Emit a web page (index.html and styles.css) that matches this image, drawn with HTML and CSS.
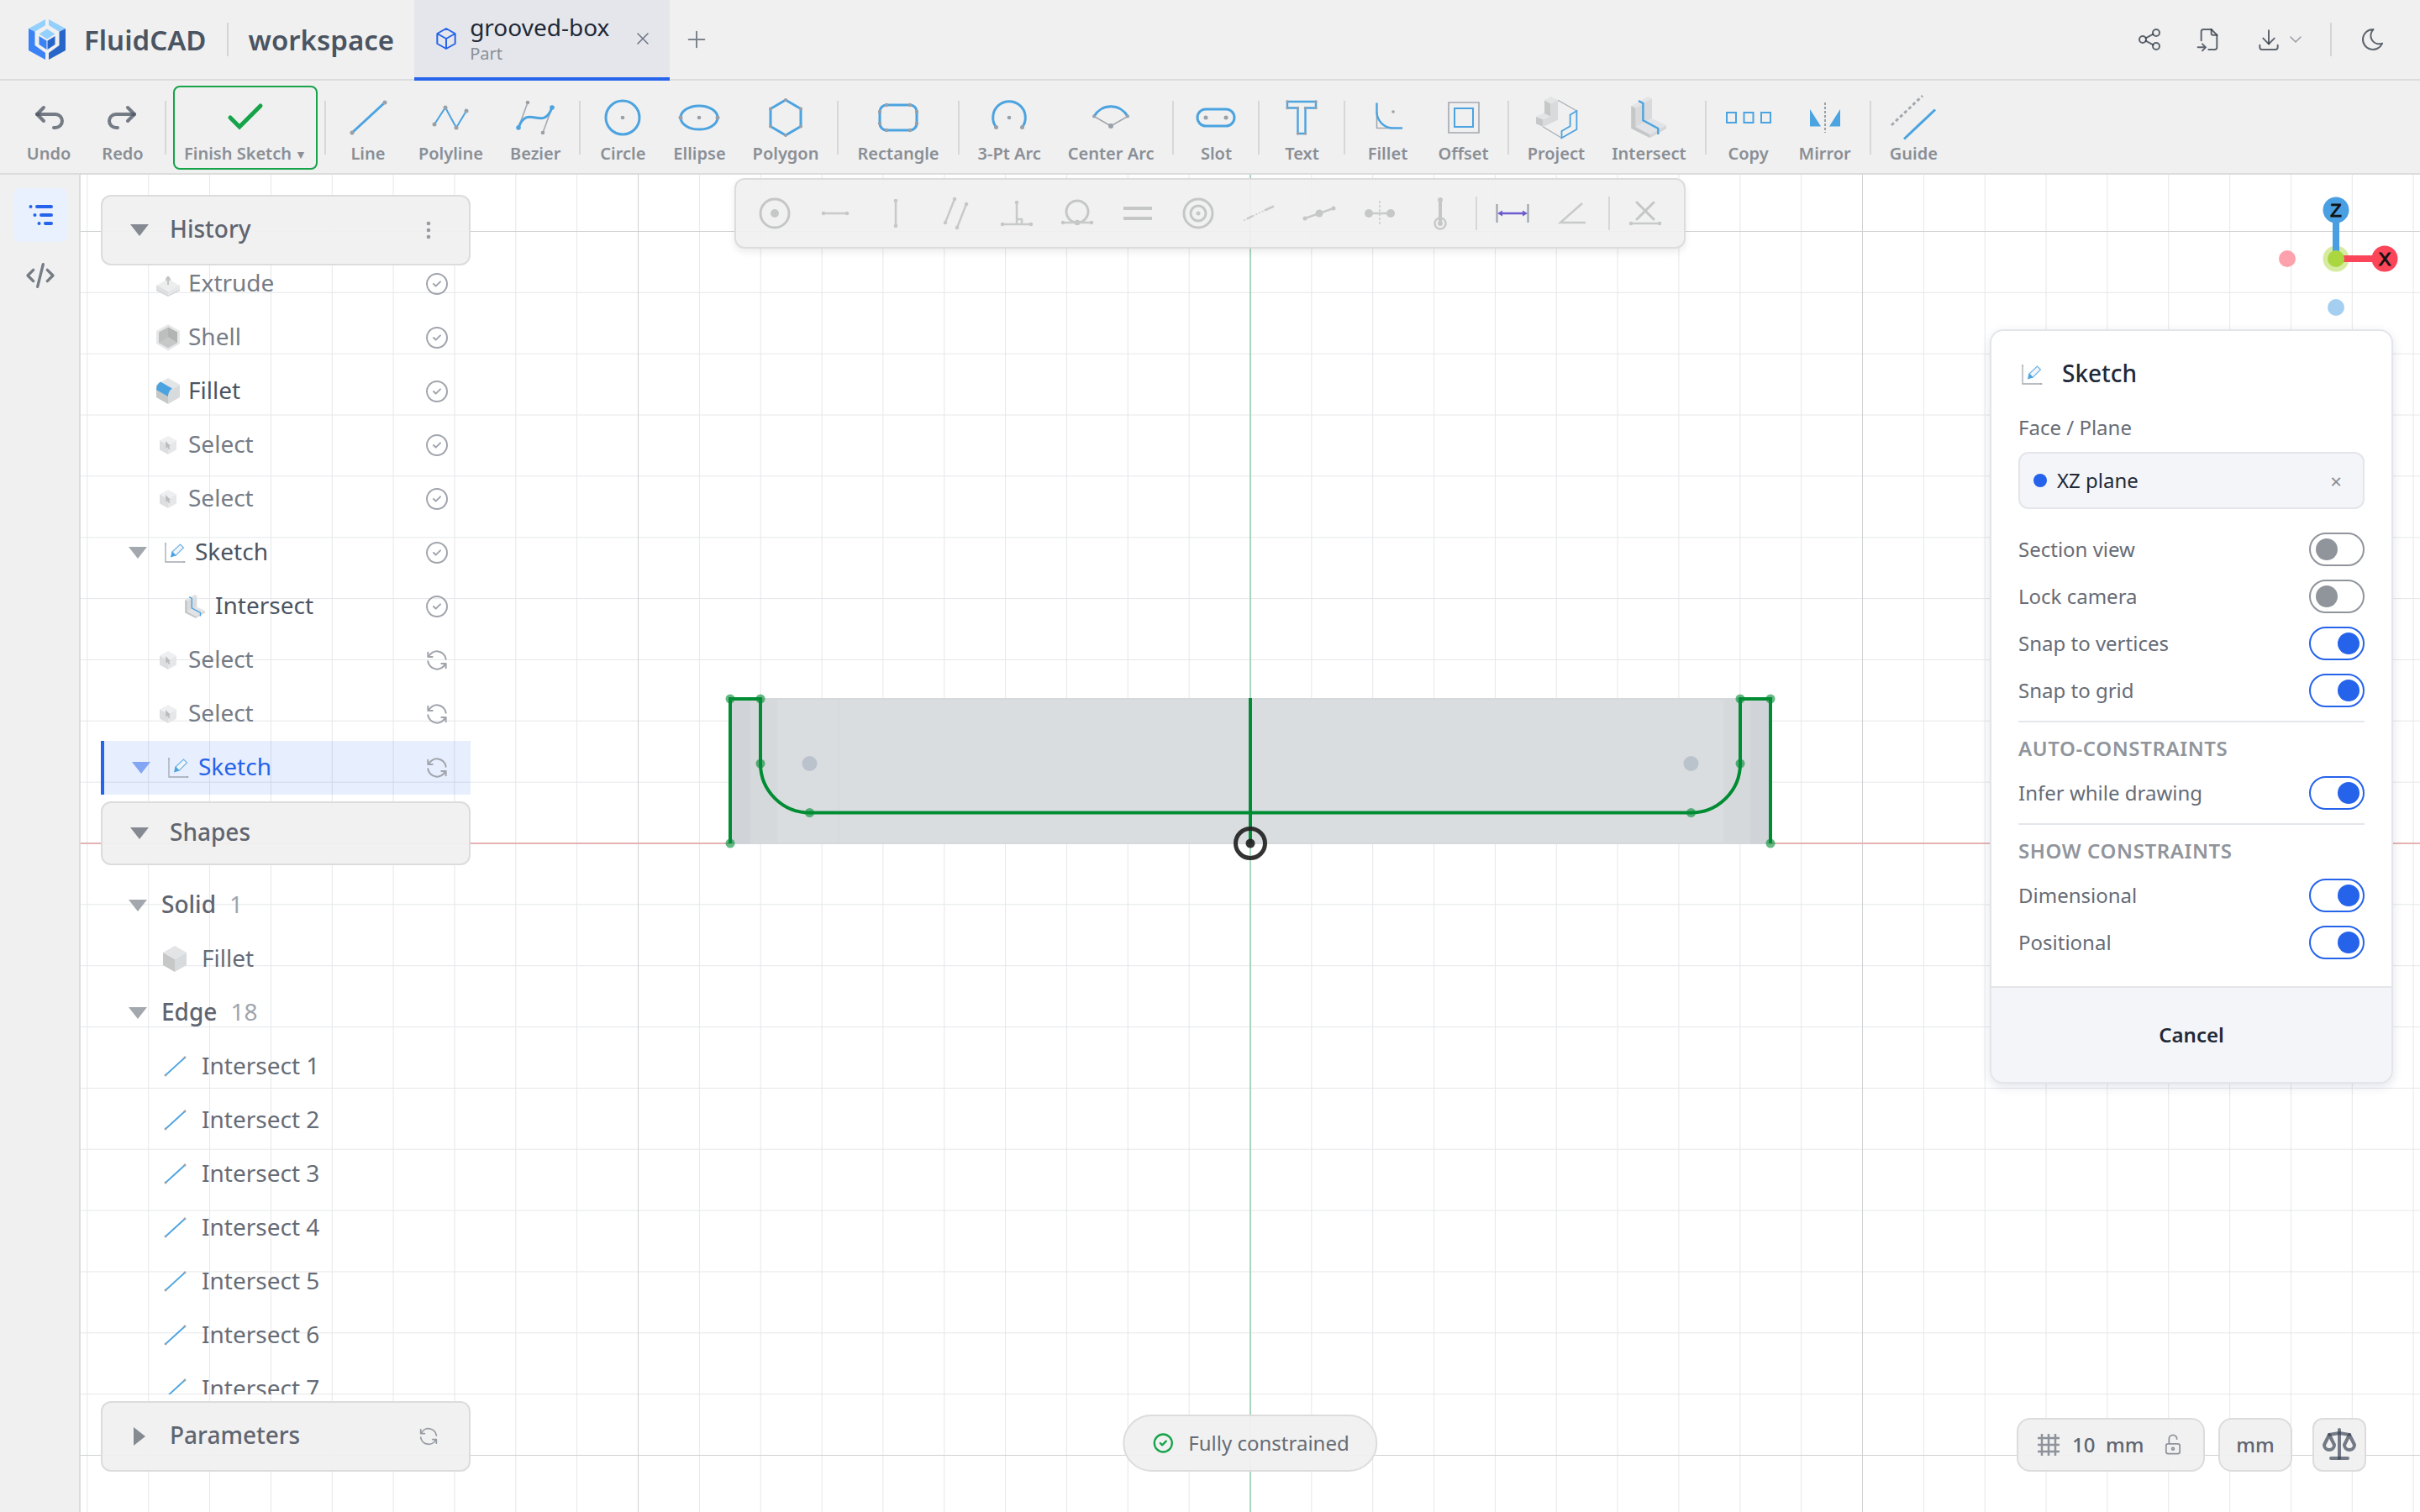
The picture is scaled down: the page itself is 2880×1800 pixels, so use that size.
FILE: index.html
```html
<!DOCTYPE html>
<html lang="en">
<head>
<meta charset="utf-8">
<title>FluidCAD – grooved-box</title>
<link rel="stylesheet" href="styles.css">
</head>
<body>
<svg class="sprite" aria-hidden="true">
  <symbol id="i-down" viewBox="0 0 24 24"><path fill="currentColor" d="M1 5h22L12 19z"/></symbol>
  <symbol id="i-right" viewBox="0 0 24 24"><path fill="currentColor" d="M5 1v22L19 12z"/></symbol>
  <symbol id="i-ok" viewBox="0 0 24 24"><path d="M3 12a9 9 0 1 0 18 0a9 9 0 1 0-18 0M9 12l2 2l4-4"/></symbol>
  <symbol id="i-refresh" viewBox="0 0 24 24"><path d="M20 11a8.1 8.1 0 0 0-15.5-2m-.5-4v4h4M4 13a8.1 8.1 0 0 0 15.5 2m.5 4v-4h-4"/></symbol>
  <symbol id="i-x" viewBox="0 0 24 24"><path d="M18 6L6 18M6 6l12 12"/></symbol>
  <symbol id="i-select" viewBox="0 0 32 32">
    <path fill="#eeeff0" d="M16 5l10 5.500-10 5.500-10-5.500z"/><path fill="#dddedf" d="M6 10.500l10 5.500v11L6 21.500z"/><path fill="#e6e7e9" d="M26 10.500L16 16v11l10-5.500z"/>
    <path fill="#b9bbbd" d="M13 11l6 6-2 .5 1.500 3-1.500.8-1.500-3-2 1.500z"/>
  </symbol>
  <symbol id="i-sketch" viewBox="0 0 32 32">
    <path fill="none" stroke="#a3a8b0" stroke-width="1.300" d="M5 5v22h23"/><path fill="#a3a8b0" d="M3.700 6L5 3.500 6.300 6zM26.500 25.700l2.500 1.300-2.500 1.300z"/>
    <path fill="#f2f5f8" stroke="#6fb4e8" stroke-width="1.200" d="M13 15l9.500-9 4 4-9.500 9.500z"/><path fill="#4ba3e0" d="M12.500 14.500l5 5-6.500 2z"/>
  </symbol>
  <symbol id="i-cube" viewBox="0 0 32 32"><path fill="#e3e4e6" d="M16 0l14 8-14 8L2 8z"/><path fill="#c6c8c8" d="M2 8l14 8v15L2 23z"/><path fill="#d8dbde" d="M30 8l-14 8v15l14-8z"/></symbol>
  <symbol id="i-segment" viewBox="0 0 32 32"><path stroke="#4ba3e0" stroke-width="1.800" d="M5 26L28 5"/><g fill="#9aa0a8"><circle cx="5" cy="26" r="1.400"/><circle cx="28" cy="5" r="1.400"/></g></symbol>
  <symbol id="i-intersect" viewBox="-28 -28 56 56">
    <path fill="#e3e4e6" d="M-20.800-14L-.600-25 4-22.700-15.300-11.300z"/><path fill="#c6c8c8" d="M-20.800-14l5.500 2.700V11L1.700 20v4.300L-20.800 13z"/>
    <path fill="#d8dadc" d="M-15.300-11.300L4-22.700V1L-15.300 11z"/><path fill="#e1e3e6" d="M-15.300 11L4 1l17 8.300L1.700 20z"/><path fill="#d4d7da" d="M21 9.300v4L1.700 24.300V20z"/>
    <path fill="none" stroke="#4ba3e0" stroke-width="2.400" d="M-12-20l5.400 3V3.300L11.300 13v7"/>
  </symbol>
</svg>

<header class="topbar">
  <a class="brand" href="#">
    <svg class="logo" viewBox="0 0 48 48">
      <path fill="#93d0fd" d="M22 0v7L9.500 14.700 2 11zM26 0v7l12.500 7.700L46 11z"/>
      <path fill="#3b82f6" d="M2 11l7.500 3.700V31L22 40v8L2 37z"/><path fill="#2765c9" d="M46 11l-7.500 3.700V31L26 40v8l20-11z"/>
      <path fill="#93d0fd" d="M24 11.500l9.500 6-9.500 6-9.500-6z"/><path fill="#3b82f6" d="M14.500 20l9 5.500V36l-9-6z"/><path fill="#2765c9" d="M33.500 20l-9 5.500V36l9-6z"/>
    </svg>
    <span>FluidCAD</span>
  </a>
  <span class="bar"></span>
  <span class="workspace">workspace</span>
  <div class="tab">
    <svg class="ico accent" viewBox="0 0 24 24"><path d="M12 3l8 4.500v9L12 21l-8-4.500v-9zM12 12l8-4.500M12 12v9M12 12L4 7.500"/></svg>
    <div class="tab-text"><span class="tab-name">grooved-box</span><span class="tab-kind">Part</span></div>
    <button class="tab-close" aria-label="Close tab"><svg class="ico s24"><use href="#i-x"/></svg></button>
  </div>
  <button class="new-tab" aria-label="New tab"><svg class="ico" viewBox="0 0 24 24"><path d="M12 5v14M5 12h14"/></svg></button>
  <div class="actions">
    <button class="act" aria-label="Share"><svg class="ico" viewBox="0 0 24 24"><path d="M3 12a3 3 0 1 0 6 0a3 3 0 1 0-6 0M15 6a3 3 0 1 0 6 0a3 3 0 1 0-6 0M15 18a3 3 0 1 0 6 0a3 3 0 1 0-6 0"/><path d="M8.700 10.700l6.600-3.400M8.700 13.300l6.600 3.400"/></svg></button>
    <button class="act" aria-label="Import"><svg class="ico" viewBox="0 0 24 24"><path d="M14 3v4a1 1 0 0 0 1 1h4"/><path d="M5 13V5a2 2 0 0 1 2-2h7l5 5v11a2 2 0 0 1-2 2h-5.500M2 19h7m-3-3l3 3l-3 3"/></svg></button>
    <button class="act download" aria-label="Export"><svg class="ico" viewBox="0 0 24 24"><path d="M4 17v2a2 2 0 0 0 2 2h12a2 2 0 0 0 2-2v-2"/><path d="M7 11l5 5l5-5"/><path d="M12 4v12"/></svg><svg class="ico s24 dim" viewBox="0 0 24 24"><path d="M6 9l6 6l6-6"/></svg></button>
    <span class="bar"></span>
    <button class="act" aria-label="Dark mode"><svg class="ico" viewBox="0 0 24 24"><path d="M12 3c.132 0 .263 0 .393 0a7.500 7.500 0 0 0 7.920 12.446a9 9 0 1 1-8.313-12.454z"/></svg></button>
  </div>
</header>

<nav class="toolbar" aria-label="Sketch tools">
  <button class="tool"><svg viewBox="-2 -2 28 28" class="hist"><path d="M9 14l-4-4l4-4"/><path d="M5 10h11a4 4 0 1 1 0 8h-1"/></svg>Undo</button>
  <button class="tool"><svg viewBox="-2 -2 28 28" class="hist"><path d="M15 14l4-4l-4-4"/><path d="M19 10H8a4 4 0 1 0 0 8h1"/></svg>Redo</button>
  <span class="sep"></span>
  <button class="tool finish"><svg viewBox="-28 -28 56 56"><path fill="none" stroke="#16a34a" stroke-width="5" stroke-linecap="round" d="M-18 0L-7 11 18-14"/></svg><span>Finish Sketch<small>▼</small></span></button>
  <span class="sep"></span>
  <button class="tool"><svg class="draw" viewBox="-28 -28 56 56"><path d="M-19 18L20-18"/><circle cx="-19" cy="18" r="2.500"/><circle cx="20" cy="-18" r="2.500"/></svg>Line</button>
  <button class="tool"><svg class="draw thin" viewBox="-28 -28 56 56"><path d="M-19 8L-6-12 7 12 19-8"/><circle cx="-19" cy="8" r="2.500"/><circle cx="-6" cy="-12" r="2.500"/><circle cx="7" cy="12" r="2.500"/><circle cx="19" cy="-8" r="2.500"/></svg>Polyline</button>
  <button class="tool"><svg class="draw" viewBox="-28 -28 56 56"><path class="g" d="M-20 12L-9-18M20-12L9 18"/><path d="M-20 12C-9-18 9 18 20-12"/><circle cx="-9" cy="-18" r="2.300"/><circle cx="9" cy="18" r="2.300"/><circle class="b" cx="-20" cy="12" r="2.800"/><circle class="b" cx="20" cy="-12" r="2.800"/></svg>Bezier</button>
  <span class="sep"></span>
  <button class="tool"><svg class="draw" viewBox="-28 -28 56 56"><path d="M-20 0a20 20 0 1 0 40 0a20 20 0 1 0-40 0"/><circle r="2.300"/></svg>Circle</button>
  <button class="tool"><svg class="draw" viewBox="-28 -28 56 56"><path d="M-22 0a22 14 0 1 0 44 0a22 14 0 1 0-44 0"/><circle r="2.300"/><circle cx="-22" r="2.500"/><circle cx="22" r="2.500"/></svg>Ellipse</button>
  <button class="tool"><svg class="draw" viewBox="-28 -28 56 56"><path d="M0-21l18 10.500v21L0 21l-18-10.500v-21z"/><circle cy="-21" r="2"/><circle cx="18" cy="-10.500" r="2"/><circle cx="18" cy="10.500" r="2"/><circle cy="21" r="2"/><circle cx="-18" cy="-10.500" r="2"/><circle cx="-18" cy="10.500" r="2"/></svg>Polygon</button>
  <span class="sep"></span>
  <button class="tool"><svg class="draw" viewBox="-28 -28 56 56"><path d="M-14-15h28a8 8 0 0 1 8 8V7a8 8 0 0 1-8 8h-28a8 8 0 0 1-8-8V-7a8 8 0 0 1 8-8z"/><circle cx="-14" cy="-15" r="2.200"/><circle cx="14" cy="-15" r="2.200"/><circle cx="-14" cy="15" r="2.200"/><circle cx="14" cy="15" r="2.200"/><circle cx="-22" cy="-7" r="2.200"/><circle cx="22" cy="-7" r="2.200"/><circle cx="-22" cy="7" r="2.200"/><circle cx="22" cy="7" r="2.200"/></svg>Rectangle</button>
  <span class="sep"></span>
  <button class="tool"><svg class="draw" viewBox="-28 -28 56 56"><path d="M-15.500 11.500A19.300 19.300 0 1 1 15.500 11.500"/><circle r="2.300"/><circle cx="-15.500" cy="11.500" r="2.500"/><circle cx="15.500" cy="11.500" r="2.500"/></svg>3-Pt Arc</button>
  <button class="tool"><svg class="draw" viewBox="-28 -28 56 56"><path class="g" d="M-20-1.500L0 10 20-1.500"/><path d="M-20-1.500A23 23 0 0 1 20-1.500"/><circle cy="10" r="3"/><circle cx="-20" cy="-1.500" r="2"/><circle cx="20" cy="-1.500" r="2"/></svg>Center Arc</button>
  <span class="sep"></span>
  <button class="tool"><svg class="draw" viewBox="-28 -28 56 56"><path d="M-12-10h24a10 10 0 0 1 0 20h-24a10 10 0 0 1 0-20z"/><circle cx="-12" r="2.500"/><circle cx="12" r="2.500"/></svg>Slot</button>
  <span class="sep"></span>
  <button class="tool"><svg class="draw mid" viewBox="-28 -28 56 56"><path d="M-17-19h34v7.500H4.500V19h-9v-30.500H-17z"/><circle cx="-17" cy="-19" r="1.700"/><circle cx="17" cy="-19" r="1.700"/><circle cx="17" cy="-11.500" r="1.700"/><circle cx="-17" cy="-11.500" r="1.700"/><circle cx="4.500" cy="-11.500" r="1.700"/><circle cx="-4.500" cy="-11.500" r="1.700"/><circle cx="4.500" cy="19" r="1.700"/><circle cx="-4.500" cy="19" r="1.700"/></svg>Text</button>
  <span class="sep"></span>
  <button class="tool"><svg class="draw mid" viewBox="-28 -28 56 56"><path class="g" d="M-12.500-7v19.500H7"/><path d="M-12.500-17.500V-7A19.500 19.500 0 0 0 7 12.500H18"/><circle cx="7" cy="-7" r="1.800"/></svg>Fillet</button>
  <button class="tool"><svg class="draw thin" viewBox="-28 -28 56 56"><path class="g" d="M-18-18h36v36h-36z"/><path d="M-11-11h22v22h-22z"/></svg>Offset</button>
  <span class="sep"></span>
  <button class="tool"><svg viewBox="-28 -28 56 56"><path fill="#e3e4e6" d="M-6.400-25L2-20.700l-8.400 4.400-7.600-4.400zM-24-1l10-5 7 4-8.600 4.300z"/><path fill="#c6c8c8" d="M-14-20.700l7.600 4.400v15L-14-5zM-24-1l8.400 3.300V11L-24 7.300z"/><path fill="#d8dadc" d="M-6.400-16.300L2-20.700V2.700L-15.600 11V2.300l9.200-4z"/><path fill="none" stroke="#a9adb3" stroke-width="1.300" d="M2-20.700L24.400-8M-15.600 11L6.500 24.300"/><path fill="none" stroke="#4ba3e0" stroke-width="1.800" d="M24.400-8v22L6.500 24.300V16l10.100-5.700V-3.300z"/></svg>Project</button>
  <button class="tool"><svg><use href="#i-intersect"/></svg>Intersect</button>
  <span class="sep"></span>
  <button class="tool"><svg class="draw thin" viewBox="-28 -28 56 56"><path d="M-26-6h11V6h-11zM-5.500-6h11V6h-11zM15-6h11V6H15z"/></svg>Copy</button>
  <button class="tool"><svg viewBox="-28 -28 56 56"><path fill="#4ba3e0" d="M-18-10l13 20.500h-13zM18-10L5 10.500h13z"/><path stroke="#9aa0a8" stroke-width="2" stroke-dasharray="3 2" d="M0-18V18"/></svg>Mirror</button>
  <span class="sep"></span>
  <button class="tool"><svg class="draw" viewBox="-28 -28 56 56"><path class="g dash" stroke-dasharray="4 3" d="M-26 9L11-26"/><path d="M-11 25.500L26-9.500"/></svg>Guide</button>
</nav>

<div class="body">
  <aside class="rail">
    <button class="rail-btn on" aria-label="Tree"><svg viewBox="0 0 64 64"><path stroke="#2563eb" stroke-width="4" stroke-linecap="round" d="M20.500 22h0M28 22h17M25.500 32h0M33 32h12M30.500 42h0M38 42h7"/></svg></button>
    <button class="rail-btn" aria-label="Code"><svg class="code" viewBox="0 0 24 24"><path d="M7 8l-4 4l4 4M17 8l4 4l-4 4M14 4l-4 16"/></svg></button>
  </aside>

  <main class="viewport">
    <svg class="scene" viewBox="-1392 -796 2784 1592" preserveAspectRatio="xMidYMid slice">
      <defs>
        <path id="cols" d="M72.850-900V900M145.700-900V900M218.550-900V900M291.400-900V900M364.250-900V900M437.100-900V900M509.950-900V900M582.800-900V900M655.650-900V900"/>
        <path id="rows" d="M-1500 72.850H1500M-1500 145.700H1500M-1500 218.550H1500M-1500 291.400H1500M-1500 364.250H1500M-1500 437.100H1500M-1500 509.950H1500M-1500 582.800H1500M-1500 655.650H1500"/>
      </defs>
      <g stroke="#e6e7ea" fill="none">
        <use href="#cols" x="-1457"/><use href="#cols" x="-728.500"/><use href="#cols"/><use href="#cols" x="728.500"/>
        <use href="#rows" y="-1457"/><use href="#rows" y="-728.500"/><use href="#rows"/><use href="#rows" y="728.500"/>
      </g>
      <path stroke="#d0d1d2" d="M-728.500-900V900M728.500-900V900M-1500-728.500H1500M-1500 728.500H1500"/>
      <path stroke="#e6b2b3" stroke-width="2" d="M-1500 0H1500"/>
      <path fill="#dadde0" d="M-619-173H619V1H-619z"/>
      <path fill="#d0d4d9" d="M-619-173h24V1h-24zM619-173h-24V1h24z"/>
      <path fill="#d5d9dc" d="M-595-173h32V1h-32zM595-173h-32V1h32zM-563-173H563v2H-563zM-563-1H563v2H-563z"/>
      <path stroke="#d5d6d8" d="M-489.500-171V-1"/>
      <path stroke="#a9d6bc" stroke-width="2" d="M0-900V900"/>
      <g fill="#bac2cc"><circle cx="-524.500" cy="-95" r="9"/><circle cx="524.500" cy="-95" r="9"/></g>
      <path fill="none" stroke="#008c33" stroke-width="4" d="M-619 0V-172h36V-95A58.500 58.500 0 0 0-524.500-36.500H524.500A58.500 58.500 0 0 0 583-95V-172h36V0M0-173V0"/>
      <g fill="#008c33" opacity=".6"><circle cx="-619" cy="-172" r="5.500"/><circle cx="-583" cy="-172" r="5.500"/><circle cx="-583" cy="-95" r="5.500"/><circle cx="-524.500" cy="-36.500" r="5.500"/><circle cx="-619" r="5.500"/><circle cx="619" cy="-172" r="5.500"/><circle cx="583" cy="-172" r="5.500"/><circle cx="583" cy="-95" r="5.500"/><circle cx="524.500" cy="-36.500" r="5.500"/><circle cx="619" r="5.500"/></g>
      <g opacity=".92"><circle r="17.500" fill="none" stroke="#222" stroke-width="5"/><circle r="5.500" fill="#222"/></g>
    </svg>

    <div class="sidebar">
      <div class="sec-head"><svg class="tri"><use href="#i-down"/></svg><span>History</span>
        <button class="icon-btn" aria-label="History menu"><svg viewBox="0 0 32 32"><g fill="#979ba2"><circle cx="16" cy="8" r="2.300"/><circle cx="16" cy="16" r="2.300"/><circle cx="16" cy="24" r="2.300"/></g></svg></button></div>
      <ul class="list history">
        <li class="row leaf mute"><svg class="pic" viewBox="0 0 32 32"><path fill="#cfd0d1" d="M2 24l14 7 14-7v-1.500L16 29 2 22.500z"/><path fill="#eceded" d="M16 10l14 8-14 6L2 18z"/><path fill="#dedfe0" d="M2 17.500l14 7V30L2 22.500z"/><path fill="#e6e7e9" d="M30 17.500l-14 7V30l14-7.500z"/><path fill="#c3c6c6" d="M15 17V12h-2.500L14 8l2-1.500L18 8l1.500 4H17v5z"/></svg>Extrude<svg class="ico status"><use href="#i-ok"/></svg></li>
        <li class="row leaf mute"><svg class="pic" viewBox="0 0 32 32"><path fill="#e6e7e8" d="M16 0l14 8v15l-14 8.500L2 23V8z"/><path fill="#bdbfbf" d="M16 3.500l11 6V22l-11 6-11-6V9.500z"/><path fill="#b2b4b4" d="M16 3.500l11 6V22l-11-7z"/><path fill="#c6c8c8" d="M5 22l11-7 11 7-11 6z"/></svg>Shell<svg class="ico status"><use href="#i-ok"/></svg></li>
        <li class="row leaf"><svg class="pic"><use href="#i-cube"/><path fill="#4ba3e0" d="M7 4.500L21 12.500q-5 3-5 9.500L2 14Q2.500 7 7 4.500z"/></svg>Fillet<svg class="ico status"><use href="#i-ok"/></svg></li>
        <li class="row leaf mute"><svg class="pic"><use href="#i-select"/></svg>Select<svg class="ico status"><use href="#i-ok"/></svg></li>
        <li class="row leaf mute"><svg class="pic"><use href="#i-select"/></svg>Select<svg class="ico status"><use href="#i-ok"/></svg></li>
        <li class="row"><svg class="tri"><use href="#i-down"/></svg><svg class="pic"><use href="#i-sketch"/></svg>Sketch<svg class="ico status"><use href="#i-ok"/></svg></li>
        <li class="row child"><svg class="pic"><use href="#i-intersect"/></svg>Intersect<svg class="ico status"><use href="#i-ok"/></svg></li>
        <li class="row leaf mute"><svg class="pic"><use href="#i-select"/></svg>Select<svg class="ico status"><use href="#i-refresh"/></svg></li>
        <li class="row leaf mute"><svg class="pic"><use href="#i-select"/></svg>Select<svg class="ico status"><use href="#i-refresh"/></svg></li>
        <li class="row active"><svg class="tri"><use href="#i-down"/></svg><svg class="pic"><use href="#i-sketch"/></svg>Sketch<svg class="ico status"><use href="#i-refresh"/></svg></li>
      </ul>
      <div class="sec-head short"><svg class="tri"><use href="#i-down"/></svg><span>Shapes</span></div>
      <ul class="list shapes">
        <li class="row group"><svg class="tri"><use href="#i-down"/></svg>Solid<span class="count">1</span></li>
        <li class="row item"><svg class="pic"><use href="#i-cube"/></svg>Fillet</li>
        <li class="row group"><svg class="tri"><use href="#i-down"/></svg>Edge<span class="count">18</span></li>
        <li class="row item"><svg class="pic"><use href="#i-segment"/></svg>Intersect 1</li>
        <li class="row item"><svg class="pic"><use href="#i-segment"/></svg>Intersect 2</li>
        <li class="row item"><svg class="pic"><use href="#i-segment"/></svg>Intersect 3</li>
        <li class="row item"><svg class="pic"><use href="#i-segment"/></svg>Intersect 4</li>
        <li class="row item"><svg class="pic"><use href="#i-segment"/></svg>Intersect 5</li>
        <li class="row item"><svg class="pic"><use href="#i-segment"/></svg>Intersect 6</li>
        <li class="row item"><svg class="pic"><use href="#i-segment"/></svg>Intersect 7</li>
      </ul>
      <div class="sec-head last"><svg class="tri"><use href="#i-right"/></svg><span>Parameters</span>
        <button class="icon-btn" aria-label="Refresh parameters"><svg class="ico s28"><use href="#i-refresh"/></svg></button></div>
    </div>

    <div class="constraints" role="toolbar" aria-label="Constraints">
      <button aria-label="Coincident"><svg viewBox="-24 -24 48 48"><circle class="o" r="17"/><circle r="5"/></svg></button>
      <button aria-label="Horizontal"><svg viewBox="-24 -24 48 48"><path class="l" d="M-14 0h28"/><circle cx="-14" r="2.300"/><circle cx="14" r="2.300"/></svg></button>
      <button aria-label="Vertical"><svg viewBox="-24 -24 48 48"><path class="l" d="M0-15v30"/><circle cy="-15" r="2.300"/><circle cy="15" r="2.300"/></svg></button>
      <button aria-label="Parallel"><svg viewBox="-24 -24 48 48"><path class="l" d="M-13 11l11-28M1 17l11-28"/><circle cx="-13" cy="11" r="2.300"/><circle cx="-2" cy="-17" r="2.300"/><circle cx="1" cy="17" r="2.300"/><circle cx="12" cy="-11" r="2.300"/></svg></button>
      <button aria-label="Perpendicular"><svg viewBox="-24 -24 48 48"><path class="l" d="M-17 13h34M0-13v26M0 7h6v6"/><circle cx="-17" cy="13" r="2.300"/><circle cx="17" cy="13" r="2.300"/><circle cy="-13" r="2.300"/></svg></button>
      <button aria-label="Tangent"><svg viewBox="-24 -24 48 48"><circle class="o" cy="-2" r="13"/><path class="l" d="M-17 11h34"/><circle cx="-17" cy="11" r="2.300"/><circle cx="17" cy="11" r="2.300"/><circle cy="11" r="3.300"/></svg></button>
      <button aria-label="Equal"><svg viewBox="-24 -24 48 48"><path class="t" d="M-17-6h34M-17 6h34"/></svg></button>
      <button aria-label="Concentric"><svg viewBox="-24 -24 48 48"><circle class="o" r="17"/><circle class="o" r="9"/><circle r="2.500"/></svg></button>
      <button aria-label="Collinear"><svg viewBox="-24 -24 48 48"><path class="l" d="M-14 6.500l7-3.500M7-3.500l11-5"/><path class="l fine" stroke-dasharray="2 2" d="M-18 8.500L7-3.500"/></svg></button>
      <button aria-label="Midpoint"><svg viewBox="-24 -24 48 48"><path class="l" d="M-17 6l34-12"/><circle r="4.500"/><circle cx="-17" cy="6" r="2.500"/><circle cx="17" cy="-6" r="2.500"/></svg></button>
      <button aria-label="Symmetric"><svg viewBox="-24 -24 48 48"><path class="l" d="M-13 0h26"/><path class="l fine" stroke-dasharray="3 2" d="M0-15v30"/><circle cx="-13" r="5"/><circle cx="13" r="5"/></svg></button>
      <button aria-label="Fix"><svg viewBox="-24 -24 48 48"><path class="t" d="M0-16v27"/><circle cy="-16" r="3"/><circle cy="12" r="3"/><circle class="l" cy="12" r="6.500"/></svg></button>
      <span class="sep"></span>
      <button aria-label="Dimension"><svg viewBox="-24 -24 48 48"><path fill="none" stroke="#979da5" stroke-width="2" d="M-18.500-11v22M18.500-11v22"/><path stroke="#6a5bd0" stroke-width="2.500" d="M-14 0h28"/><path fill="#6a5bd0" d="M-18 0l6-3.500v7zM18 0l-6-3.500v7z"/></svg></button>
      <button aria-label="Angle"><svg viewBox="-24 -24 48 48"><path class="l" d="M11-12L-15 11h30"/></svg></button>
      <span class="sep"></span>
      <button aria-label="Delete constraint"><svg viewBox="-24 -24 48 48"><path class="o" stroke-linecap="round" d="M-10-13L10 7M10-13L-10 7"/><path class="l" d="M-17 12h34"/><circle cx="-17" cy="12" r="2.300"/><circle cx="17" cy="12" r="2.300"/></svg></button>
    </div>

    <svg class="gizmo" viewBox="-74 -74 148 148">
      <circle r="15.500" fill="#d6eaa0"/><path stroke="#4a9fe3" stroke-width="8" d="M0-44V-9"/><path stroke="#fb4559" stroke-width="8" d="M9 0h36"/><circle r="10" fill="#aad740"/>
      <circle cy="-58" r="15.500" fill="#4a9fe3"/><circle cx="58" r="15.500" fill="#fb4559"/><circle cx="-58" r="10" fill="#fda1ac"/><circle cy="58" r="10" fill="#a4cff1"/>
      <text x="0" y="-50" text-anchor="middle">Z</text><text x="58" y="8" text-anchor="middle">X</text>
    </svg>

    <section class="panel">
      <div class="panel-body">
        <h2><svg class="pic"><use href="#i-sketch"/></svg><span>Sketch</span></h2>
        <div class="flabel">Face / Plane</div>
        <div class="field"><i></i><span>XZ plane</span><button aria-label="Clear plane">×</button></div>
        <div class="group-rows">
          <label>Section view<input type="checkbox"></label>
          <label>Lock camera<input type="checkbox"></label>
          <label>Snap to vertices<input type="checkbox" checked></label>
          <label>Snap to grid<input type="checkbox" checked></label>
          <hr>
          <h3>AUTO-CONSTRAINTS</h3>
          <label>Infer while drawing<input type="checkbox" checked></label>
          <hr>
          <h3>SHOW CONSTRAINTS</h3>
          <label>Dimensional<input type="checkbox" checked></label>
          <label>Positional<input type="checkbox" checked></label>
        </div>
      </div>
      <button class="cancel">Cancel</button>
    </section>

    <div class="pill"><svg class="ico s28"><use href="#i-ok"/></svg><span>Fully constrained</span></div>

    <div class="units">
      <div class="unit-box snap">
        <svg class="hash" viewBox="0 0 28 28"><path d="M6 1v26M14 1v26M22 1v26M1 6h26M1 14h26M1 22h26"/></svg>
        <input class="size" value="10" aria-label="Grid size"><span>mm</span>
        <svg class="ico s28 lock" viewBox="0 0 24 24"><path d="M5 13a2 2 0 0 1 2-2h10a2 2 0 0 1 2 2v6a2 2 0 0 1-2 2H7a2 2 0 0 1-2-2zM8 11V6a4 4 0 0 1 8 0"/><circle cx="12" cy="16" r="1.200"/></svg>
      </div>
      <button class="unit-box"><span>mm</span></button>
      <button class="unit-box scale" aria-label="Mass properties"><svg viewBox="0 0 24 24"><path d="M7 20h10"/><path d="M6 6l6-1l6 1"/><path d="M12 3v17"/><path d="M9 12L6 6l-3 6a3 3 0 0 0 6 0"/><path d="M21 12l-3-6l-3 6a3 3 0 0 0 6 0"/></svg></button>
    </div>
  </main>
</div>
</body>
</html>
```

FILE: styles.css
```css
* { box-sizing: border-box; }
html, body { height: 100%; }
body {
  margin: 0;
  display: flex;
  flex-direction: column;
  background: #fff;
  color: #1f2937;
  font-family: "Noto Sans", sans-serif;
  font-size: 24px;
  overflow: hidden;
}
button, input { font: inherit; color: inherit; }
button { background: none; border: 0; padding: 0; cursor: pointer; }
ul { list-style: none; margin: 0; padding: 0; }
svg { display: block; flex: none; }
.sprite { position: absolute; width: 0; height: 0; }

.ico {
  width: 32px;
  height: 32px;
  fill: none;
  stroke: currentColor;
  stroke-width: 1.5;
  stroke-linecap: round;
  stroke-linejoin: round;
}
.s24 { width: 24px; height: 24px; }
.s28 { width: 28px; height: 28px; }
.accent { color: #2563eb; }
.pic { width: 32px; height: 32px; }

/* header */
.topbar {
  display: flex;
  align-items: center;
  flex: none;
  height: 96px;
  padding: 0 24px 0 32px;
  background: #f0f0f0;
  border-bottom: 2px solid #dcdcdc;
}
.brand {
  display: flex;
  align-items: center;
  gap: 18px;
  color: #4b5462;
  text-decoration: none;
  font-size: 33px;
  font-weight: 600;
}
.brand span { padding-left: 2px; }
.logo { width: 48px; height: 48px; }
.bar { width: 2px; height: 40px; background: #d3d4d6; }
.brand + .bar { margin: 0 24px; }
.workspace { color: #4b5462; font-size: 33px; font-weight: 600; }
.tab {
  display: flex;
  align-items: center;
  align-self: stretch;
  margin: 0 0 -2px 24px;
  padding: 0 12px 0 22px;
  background: #e4e6eb;
  border-bottom: 4px solid #2563eb;
}
.tab-text { display: flex; flex-direction: column; margin: 0 20px 0 12px; }
.tab-name { font-size: 28px; line-height: 36px; }
.tab-kind { font-size: 20px; line-height: 28px; color: #8a8f98; }
.tab-close { display: grid; place-items: center; width: 40px; height: 40px; color: #6b7280; }
.new-tab { display: grid; place-items: center; width: 64px; height: 64px; color: #7d838d; }
.actions { display: flex; align-items: center; gap: 7px; margin-left: auto; }
.act { display: flex; align-items: center; justify-content: center; width: 64px; height: 64px; color: rgba(31, 41, 55, .7); }
.download { width: 76px; gap: 4px; justify-content: flex-end; }
.dim { opacity: .6; }
.actions .bar { margin: 0 10px 0 22px; }

/* sketch toolbar */
.toolbar {
  display: flex;
  align-items: center;
  gap: 4px;
  flex: none;
  height: 112px;
  padding: 2px 16px 0;
  background: #f0f0f0;
  border-bottom: 2px solid #dcdcdc;
}
.tool {
  display: flex;
  flex-direction: column;
  align-items: center;
  height: 100px;
  padding: 10px 14px 4px;
  font-size: 20px;
  line-height: 30px;
  font-weight: 600;
  color: #8a8f96;
  white-space: nowrap;
}
.tool svg { width: 56px; height: 56px; }
.finish { padding: 8px 11px 2px; border: 2px solid #16a34a; border-radius: 8px; }
.finish small { margin-left: 4px; font-size: 14px; line-height: 20px; vertical-align: 1px; }
.sep { flex: none; width: 2px; height: 64px; margin: 0 4px; background: #d6d7d9; }
.hist { fill: none; stroke: rgba(75, 84, 98, .75); stroke-width: 2; stroke-linecap: round; stroke-linejoin: round; }
.draw path { fill: none; stroke: #4ba3e0; stroke-width: 3; }
.thin path { stroke-width: 2; }
.mid path { stroke-width: 2.4; }
.draw .g { stroke: #a3a8b0; stroke-width: 1.6; }
.draw .dash { stroke-width: 3; }
.draw circle { fill: #9aa0a8; }
.draw .b { fill: #4ba3e0; }

/* body */
.body { display: flex; flex: 1; min-height: 0; }
.rail {
  display: flex;
  flex-direction: column;
  align-items: center;
  gap: 8px;
  flex: none;
  width: 96px;
  padding: 16px 0 0 2px;
  background: #f0f0f0;
  border-right: 2px solid #dcdcdc;
}
.rail-btn { display: grid; place-items: center; width: 64px; height: 64px; border-radius: 8px; }
.rail-btn svg { width: 64px; height: 64px; }
.on { background: #e9f0fe; }
.rail-btn .code { width: 40px; height: 40px; fill: none; stroke: #757c85; stroke-width: 2; stroke-linecap: round; stroke-linejoin: round; }

.viewport { position: relative; flex: 1; min-width: 0; }
.scene { position: absolute; inset: 0; width: 100%; height: 100%; }

/* feature tree floating over the scene */
.sidebar {
  position: absolute;
  top: 24px;
  bottom: 48px;
  left: 24px;
  width: 440px;
  display: flex;
  flex-direction: column;
  font-size: 28px;
}
.sec-head {
  display: flex;
  align-items: center;
  flex: none;
  height: 84px;
  padding: 0 32px;
  background: rgba(240, 240, 240, .95);
  border: 2px solid #dcdcdd;
  border-radius: 12px;
  color: #5f6570;
  font-weight: 500;
}
.sec-head span { flex: 1; margin-left: 24px; padding-bottom: 4px; }
.tri { width: 24px; height: 24px; color: #858a92; }
.short { height: 76px; margin-top: 8px; }
.last { margin-top: 8px; }
.icon-btn { display: grid; place-items: center; width: 32px; height: 32px; color: #979ba2; }
.icon-btn svg:not(.s28) { width: 32px; height: 32px; }
.list { display: flex; flex: 1 1 0; flex-direction: column; min-height: 0; overflow: hidden; }
.history { justify-content: flex-end; }
.shapes .row:first-child { margin-top: 16px; }
.row {
  display: flex;
  align-items: center;
  flex: none;
  height: 64px;
  padding: 0 24px 5px 32px;
  line-height: 58px;
  color: #4b5462;
}
.row > svg { position: relative; top: 2px; }
.row .tri { margin-right: 16px; color: #a3a7ae; }
.row .pic { margin-right: 8px; }
.row.leaf { padding-left: 64px; }
.row.child { padding-left: 96px; }
.mute { color: #757c86; }
.status { margin-left: auto; color: #a0a4ac; }
.active { border-left: 4px solid #2563eb; background: rgba(37, 99, 235, .11); color: #2563eb; }
.active .tri { color: #83a5f4; }
.group { font-weight: 500; color: #5f6570; }
.count { margin-left: 16px; font-weight: 400; color: #a0a4ac; }
.row.item { padding-left: 72px; color: #666c76; }
.item .pic { margin-right: 16px; }

/* constraint palette */
.constraints {
  position: absolute;
  top: 4px;
  left: 50%;
  margin-left: -48px;
  transform: translateX(-50%);
  display: flex;
  align-items: center;
  gap: 4px;
  padding: 6px 12px;
  background: rgba(240, 240, 240, .93);
  border: 2px solid #dcdcdc;
  border-radius: 12px;
  box-shadow: 0 4px 8px rgba(0, 0, 0, .08);
}
.constraints button { display: grid; place-items: center; width: 68px; height: 68px; }
.constraints svg { width: 48px; height: 48px; fill: #c6c8c8; }
.constraints .sep { height: 40px; }
.constraints .l { fill: none; stroke: #c8caca; stroke-width: 2.5; }
.constraints .o { fill: none; stroke: #c5c7c7; stroke-width: 3; }
.constraints .t { stroke: #c5c7c7; stroke-width: 4; }
.constraints .fine { stroke-width: 1.5; }

.gizmo { position: absolute; top: 26px; right: 26px; width: 148px; height: 148px; }
.gizmo text { font: 22px "Liberation Sans", sans-serif; fill: #111; stroke: #111; stroke-width: 1px; }

/* sketch options */
.panel {
  position: absolute;
  top: 184px;
  right: 32px;
  width: 480px;
  background: #fff;
  border: 2px solid #e4e5ea;
  border-radius: 16px;
  box-shadow: 0 4px 12px rgba(30, 50, 90, .13);
  overflow: hidden;
  color: #666c76;
}
.panel-body { padding: 32px; }
.panel h2 {
  display: flex;
  align-items: center;
  gap: 20px;
  height: 40px;
  margin: 0 0 24px;
  font-size: 28px;
  line-height: 36px;
  font-weight: 500;
  color: #1f2937;
}
.panel h2 span { padding-bottom: 4px; }
.flabel { margin-bottom: 10px; line-height: 38px; }
.field {
  display: flex;
  align-items: center;
  height: 68px;
  margin-bottom: 28px;
  padding: 0 16px;
  background: #f4f5f9;
  border: 2px solid #e4e5ea;
  border-radius: 12px;
  color: #1f2937;
}
.field i { width: 16px; height: 16px; border-radius: 50%; background: #2563eb; }
.field span { flex: 1; margin-left: 12px; padding-bottom: 2px; }
.field button { width: 32px; color: #858a92; }
.group-rows { display: flex; flex-direction: column; gap: 16px; }
.group-rows label { display: flex; align-items: center; justify-content: space-between; height: 40px; line-height: 38px; }
.group-rows hr { width: 100%; height: 2px; margin: 0; border: 0; background: #e4e7eb; }
.group-rows h3 { height: 32px; margin: 0; font-size: 24px; line-height: 30px; font-weight: 600; letter-spacing: .025em; color: #90959c; }
input[type="checkbox"] {
  appearance: none;
  display: flex;
  align-items: center;
  width: 66px;
  height: 40px;
  margin: 0;
  padding: 0 6px;
  border: 2px solid #90959c;
  border-radius: 20px;
}
input[type="checkbox"]::before { content: ""; width: 26px; height: 26px; border-radius: 50%; background: #90959c; }
input[type="checkbox"]:checked { justify-content: flex-end; padding: 0 4px; border-color: #2563eb; }
input[type="checkbox"]:checked::before { background: #2563eb; }
.cancel {
  display: block;
  width: 100%;
  height: 114px;
  padding-bottom: 2px;
  background: #f4f5f9;
  border-top: 2px solid #e4e5ea;
  font-weight: 600;
  color: #1f2937;
}

/* status and units */
.pill {
  position: absolute;
  bottom: 48px;
  left: 50%;
  transform: translateX(-50%);
  display: flex;
  align-items: center;
  gap: 16px;
  height: 68px;
  padding: 0 32px;
  background: rgba(240, 240, 240, .95);
  border: 2px solid #dcdcdd;
  border-radius: 34px;
  color: #666c76;
}
.pill svg { color: #16a34a; stroke-width: 2; }
.pill span { padding-bottom: 2px; }
.units { position: absolute; right: 64px; bottom: 48px; display: flex; gap: 16px; }
.unit-box {
  display: flex;
  align-items: center;
  justify-content: center;
  height: 64px;
  min-width: 88px;
  padding: 0 19px;
  background: rgba(240, 240, 240, .93);
  border: 2px solid #dcdcdd;
  border-radius: 16px;
  color: #5f6570;
  font-weight: 500;
}
.unit-box span, .size { padding: 0 0 2px; }
.snap { width: 224px; padding: 0 22px; justify-content: flex-start; }
.hash { width: 28px; height: 28px; fill: none; stroke: rgba(75, 84, 98, .6); stroke-width: 2.5; }
.size { width: 28px; margin: 0 12px 0 14px; border: 0; background: none; }
.lock { margin-left: auto; color: #8d929a; }
.scale { width: 64px; min-width: 0; padding: 0; margin-left: 8px; border-radius: 12px; }
.scale svg { width: 48px; height: 48px; fill: none; stroke: rgba(55, 65, 81, .68); stroke-width: 2; stroke-linecap: round; stroke-linejoin: round; }
```
